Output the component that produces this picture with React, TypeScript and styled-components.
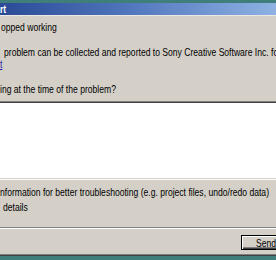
import React from 'react';
import styled, { createGlobalStyle } from 'styled-components';

const Global = createGlobalStyle`
  html, body { margin: 0; padding: 0; width: 276px; height: 260px; overflow: hidden; background: #d4d0c8; }
  #root { width: 276px; height: 260px; }
`;

const Screen = styled.div`
  width: 276px;
  height: 260px;
  display: flex;
  flex-direction: column;
  overflow: hidden;
  font-family: "Liberation Sans", Arial, sans-serif;
  font-size: 11px;
  color: #000;
`;

const Desktop = styled.div<{ $h: number }>`
  flex: none;
  height: ${(p) => p.$h}px;
  background: #3f7e7b;
`;

const TitleBar = styled.div`
  flex: none;
  height: 12px;
  line-height: 12px;
  background: linear-gradient(90deg, #2a4a96 0%, #4f74bb 45%, #8fb2e3 100%);
  color: #fff;
  font-weight: bold;
  border-bottom: 1px solid #ebe9e3;
  overflow: hidden;
  white-space: nowrap;
`;

const Window = styled.div`
  flex: 1;
  display: flex;
  flex-direction: column;
  background: #d4d0c8;
  border-bottom: 1px solid #404040;
  box-shadow: inset 0 -1px 0 #808080;
  overflow: hidden;
`;

const Txt = styled.span`
  display: inline-block;
  white-space: nowrap;
  transform: scaleX(0.78);
  transform-origin: 0 0;
`;

const Line = styled.div<{ $top: number; $indent?: number }>`
  margin-top: ${(p) => p.$top}px;
  padding-left: ${(p) => p.$indent ?? 0}px;
  height: 12px;
  line-height: 12px;
  white-space: nowrap;
`;

const Link = styled.span`
  color: #1c1ca6;
  text-decoration: underline;
`;

const TextBox = styled.div`
  margin-top: 6px;
  height: 77px;
  margin-left: -4px;
  margin-right: -4px;
  background: #fff;
  border-top: 1px solid #808080;
  border-bottom: 1px solid #fff;
  box-shadow: inset 0 1px 0 #404040, inset 0 -1px 0 #d4d0c8;
`;

const Separator = styled.div`
  margin-top: 14px;
  height: 0;
  border-top: 1px solid #808080;
  border-bottom: 1px solid #fff;
`;

const Footer = styled.div`
  margin-top: 6px;
  padding-left: 241px;
  display: flex;
`;

const Button = styled.button`
  flex: none;
  width: 76px;
  height: 15px;
  padding: 0 0 0 14px;
  margin: 0;
  text-align: left;
  font: inherit;
  line-height: 12px;
  color: #000;
  background: #d4d0c8;
  border: 1px solid #000;
  box-shadow: inset 1px 1px 0 #fff, inset -1px -1px 0 #404040, inset -2px -2px 0 #808080;
`;

export default function App() {
  return (
    <>
      <Global />
      <Screen>
        <Desktop $h={3} />
        <TitleBar>
          <Txt>rt</Txt>
        </TitleBar>
        <Window>
          <Line $top={5} $indent={1}>
            <Txt>opped working</Txt>
          </Line>
          <Line $top={13} $indent={4}>
            <Txt>problem can be collected and reported to Sony Creative Software Inc. fo</Txt>
          </Line>
          <Line $top={0}>
            <Txt>
              <Link>t</Link>
            </Txt>
          </Line>
          <Line $top={13}>
            <Txt>ing at the time of the problem?</Txt>
          </Line>
          <TextBox />
          <Line $top={6}>
            <Txt>nformation for better troubleshooting (e.g. project files, undo/redo data)</Txt>
          </Line>
          <Line $top={3} $indent={3}>
            <Txt>details</Txt>
          </Line>
          <Separator />
          <Footer>
            <Button>
              <Txt>Send</Txt>
            </Button>
          </Footer>
        </Window>
        <Desktop $h={4} />
      </Screen>
    </>
  );
}
